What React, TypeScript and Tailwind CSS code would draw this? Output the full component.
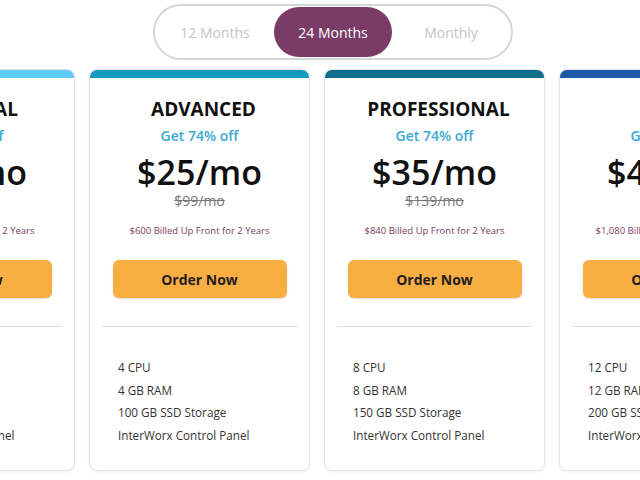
import React from 'react';

interface Plan {
  name: string;
  bar: string;
  price: number;
  was: number;
  billed: string;
  cpu: number;
  ram: number;
  ssd: number;
}

// bar colours darken card by card
const PLANS: Plan[] = [
  { name: 'ESSENTIAL', bar: 'bg-[#5ccbf3]', price: 15, was: 59, billed: '$360', cpu: 2, ram: 2, ssd: 50 },
  { name: 'ADVANCED', bar: 'bg-[#1699c1]', price: 25, was: 99, billed: '$600', cpu: 4, ram: 4, ssd: 100 },
  { name: 'PROFESSIONAL', bar: 'bg-[#0e6e8c]', price: 35, was: 139, billed: '$840', cpu: 8, ram: 8, ssd: 150 },
  { name: 'ELITE', bar: 'bg-[#1c5aa8]', price: 45, was: 179, billed: '$1,080', cpu: 12, ram: 12, ssd: 200 },
];

const TERMS = ['12 Months', '24 Months', 'Monthly'];

function TermToggle() {
  return (
    <div className="ml-[153px] mt-1 flex w-fit rounded-full border-2 border-[#d6d6d6] p-[1px]">
      {TERMS.map((t) => (
        <div
          key={t}
          className={
            t === '24 Months'
              ? 'flex h-[50px] w-[118px] items-center justify-center rounded-full bg-[#7a3b66] text-[14px] text-white'
              : 'flex h-[50px] w-[118px] items-center justify-center rounded-full text-[14px] text-[#c4c4c4]'
          }
        >
          {t}
        </div>
      ))}
    </div>
  );
}

function PlanCard({ plan }: { plan: Plan }) {
  const features = [
    `${plan.cpu} CPU`,
    `${plan.ram} GB RAM`,
    `${plan.ssd} GB SSD Storage`,
    'InterWorx Control Panel',
  ];
  return (
    <div className="w-[221px] shrink-0 overflow-hidden rounded-lg border border-[#e3e3e3] bg-white shadow-[0_1px_3px_rgba(0,0,0,0.06)]">
      <div className={`h-2 ${plan.bar}`} />
      <div className="flex flex-col items-center pt-[18px] text-center">
        <div className="pl-2 text-[19px] font-bold leading-[26px] text-[#111]">{plan.name}</div>
        <div className="mt-[4px] text-[14px] font-semibold leading-5 text-[#3ca8d4]">Get 74% off</div>
        <div className="mt-[7px] text-[34px] font-semibold leading-[38px] text-[#111]">${plan.price}/mo</div>
        <div className="text-[14px] leading-5 text-[#777] line-through">${plan.was}/mo</div>
        <div className="mt-[13px] text-[9.5px] leading-[14px] text-[#7a3c5e]">
          {plan.billed} Billed Up Front for 2 Years
        </div>
        <button
          type="button"
          className="mt-[22px] h-[38px] w-[174px] rounded-md bg-[#f9ae43] text-[14px] font-bold text-[#1d1d1d] shadow-[0_1px_2px_rgba(0,0,0,0.15)]"
        >
          Order Now
        </button>
      </div>
      <div className="mx-3 mt-[28px] border-t border-[#dcdcdc]" />
      <ul className="mt-[29px] pb-[23px] pl-[28px] text-[11.7px] leading-[22.7px] text-[#333]">
        {features.map((f) => (
          <li key={f}>{f}</li>
        ))}
      </ul>
    </div>
  );
}

export default function App() {
  return (
    <div className="h-[480px] w-[640px] overflow-hidden bg-white font-['Open_Sans',sans-serif]">
      <TermToggle />
      <div className="-ml-[146px] mt-[9px] flex gap-[14px]">
        {PLANS.map((p) => (
          <PlanCard key={p.name} plan={p} />
        ))}
      </div>
    </div>
  );
}
